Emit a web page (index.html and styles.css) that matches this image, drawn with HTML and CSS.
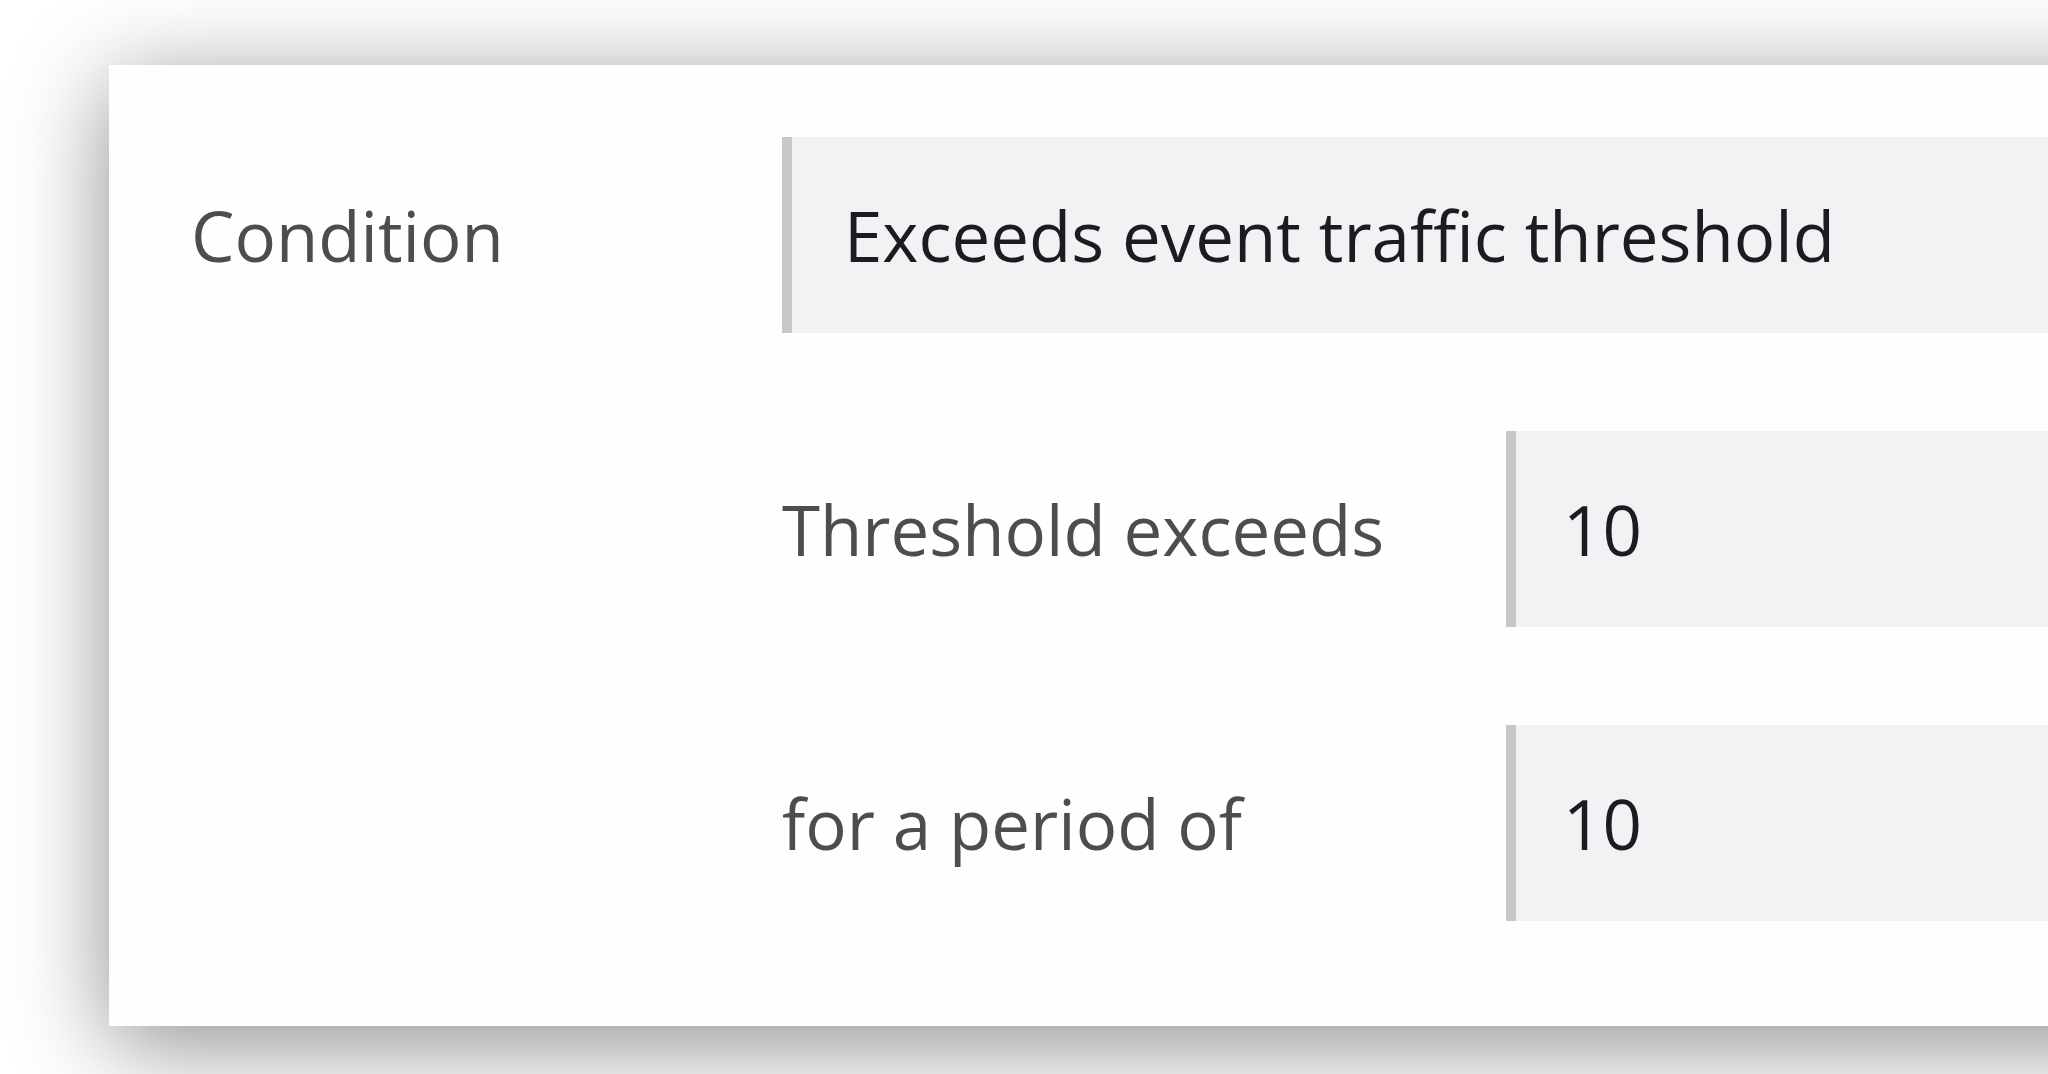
FILE: index.html
```html
<!DOCTYPE html>
<html>
<head>
<meta charset="utf-8">
<link rel="stylesheet" href="styles.css">
</head>
<body>
<div class="page">
  <div class="card">
    <div class="form">
      <div class="label">Condition</div>
      <div class="field field-select"><span>Exceeds event traffic threshold</span></div>
      <div></div>
      <div class="subform">
        <div class="label">Threshold exceeds</div>
        <div class="field"><span>10</span></div>
        <div class="label">for a period of</div>
        <div class="field"><span>10</span></div>
      </div>
    </div>
  </div>
</div>
</body>
</html>
```

FILE: styles.css
```css
html, body {
  margin: 0;
  padding: 0;
  background: #ffffff;
  overflow: hidden;
  width: 2048px;
  height: 1074px;
}
.page {
  padding: 65px 0 0 109px;
}
.card {
  width: 2200px;
  height: 961px;
  box-sizing: border-box;
  background: #fefefe;
  padding: 72px 0 0 82px;
  box-shadow: 0 18px 90px rgba(0, 0, 0, 0.45);
  font-family: "Open Sans", "Noto Sans", sans-serif;
  font-size: 69px;
}
.form {
  display: grid;
  grid-template-columns: 591px 1fr;
  row-gap: 98px;
  align-items: center;
}
.subform {
  display: grid;
  grid-template-columns: 724px 1fr;
  row-gap: 98px;
  align-items: center;
}
.label {
  color: #4b4d51;
  white-space: nowrap;
}
.field {
  height: 196px;
  box-sizing: border-box;
  background: #f1f2f4;
  border-left: 10px solid #c6c7c9;
  padding-left: 47px;
  display: flex;
  align-items: center;
  color: #1b1c1f;
  white-space: nowrap;
}
.field-select {
  padding-left: 52px;
}
```
